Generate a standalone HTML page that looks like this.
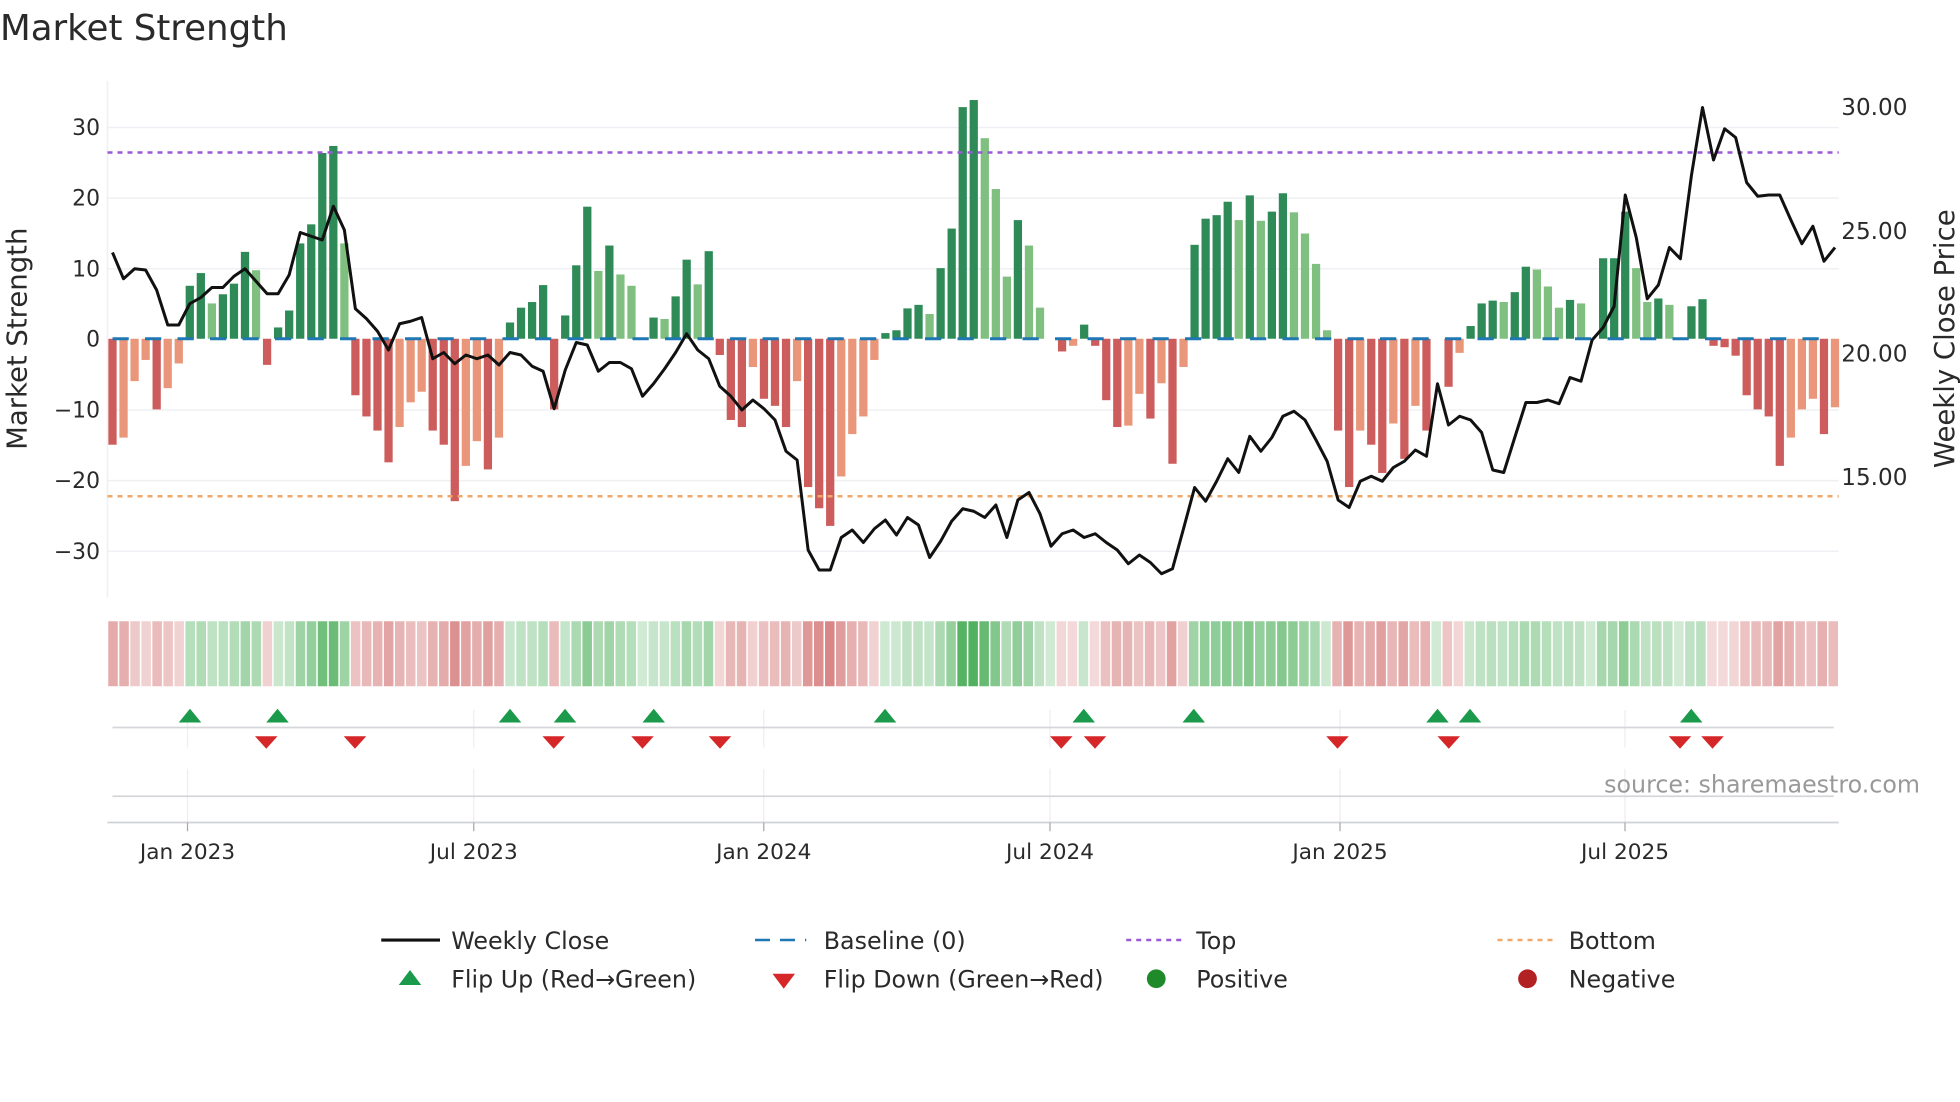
<!DOCTYPE html>
<html><head><meta charset="utf-8"><style>
html,body{margin:0;padding:0;background:#fff;width:1960px;height:1102px;overflow:hidden}
svg{display:block}
text{font-family:"DejaVu Sans","Liberation Sans",sans-serif;fill:#2a2a2a}
</style></head><body>
<svg id="s" width="1960" height="1102" viewBox="0 0 1568 881.6" xmlns="http://www.w3.org/2000/svg">
<text x="0" y="32" font-size="28.5">Market Strength</text>
<g stroke="#eef0f3" stroke-width="1.2">
<line x1="86" x2="1471" y1="102" y2="102"/><line x1="86" x2="1471" y1="158.5" y2="158.5"/><line x1="86" x2="1471" y1="215" y2="215"/>
<line x1="86" x2="1471" y1="328" y2="328"/><line x1="86" x2="1471" y1="384.5" y2="384.5"/><line x1="86" x2="1471" y1="441" y2="441"/>
<line x1="86" x2="86" y1="65" y2="478"/>
</g>
<g font-size="17.5" text-anchor="end">
<text x="80" y="108">30</text><text x="80" y="164.5">20</text><text x="80" y="221">10</text><text x="80" y="277">0</text>
<text x="80" y="334">−10</text><text x="80" y="390.5">−20</text><text x="80" y="447">−30</text>
</g>
<g font-size="18.5"><text x="1473" y="92">30.00</text><text x="1473" y="191">25.00</text><text x="1473" y="289">20.00</text><text x="1473" y="388">15.00</text></g>
<text font-size="22" transform="translate(21,271) rotate(-90)" text-anchor="middle">Market Strength</text>
<text font-size="22" transform="translate(1563,271) rotate(-90)" text-anchor="middle">Weekly Close Price</text>
<g id="bars"></g>
<line x1="86" x2="1471" y1="122" y2="122" stroke="#9b59d6" stroke-width="2" stroke-dasharray="4,4"/>
<line x1="86" x2="1471" y1="397" y2="397" stroke="#f0a868" stroke-width="2" stroke-dasharray="4,4"/>
<polyline id="price" fill="none" stroke="#111" stroke-width="2.4" stroke-linejoin="round"/>
<g id="heat"></g>
<g stroke="#eceef2" stroke-width="1">
<line x1="150" x2="150" y1="568" y2="598"/><line x1="379" x2="379" y1="568" y2="598"/><line x1="611" x2="611" y1="568" y2="598"/><line x1="840" x2="840" y1="568" y2="598"/><line x1="1072" x2="1072" y1="568" y2="598"/><line x1="1300" x2="1300" y1="568" y2="598"/>
<line x1="150" x2="150" y1="615" y2="658"/><line x1="379" x2="379" y1="615" y2="658"/><line x1="611" x2="611" y1="615" y2="658"/><line x1="840" x2="840" y1="615" y2="658"/><line x1="1072" x2="1072" y1="615" y2="658"/><line x1="1300" x2="1300" y1="615" y2="658"/>
</g>
<line x1="90" x2="1467" y1="582" y2="582" stroke="#d4d6da" stroke-width="1.4"/>
<line x1="90" x2="1467" y1="637" y2="637" stroke="#d4d6da" stroke-width="1.4"/>
<line x1="86" x2="1471" y1="658" y2="658" stroke="#cfd1d5" stroke-width="1.4"/>
<g stroke="#aaa" stroke-width="1"><line x1="150" x2="150" y1="658" y2="665"/><line x1="379" x2="379" y1="658" y2="665"/><line x1="611" x2="611" y1="658" y2="665"/><line x1="840" x2="840" y1="658" y2="665"/><line x1="1072" x2="1072" y1="658" y2="665"/><line x1="1300" x2="1300" y1="658" y2="665"/></g>
<g id="mk"></g>
<g font-size="17.3" text-anchor="middle">
<text x="150" y="687">Jan 2023</text><text x="379" y="687">Jul 2023</text><text x="611" y="687">Jan 2024</text><text x="840" y="687">Jul 2024</text><text x="1072" y="687">Jan 2025</text><text x="1300" y="687">Jul 2025</text>
</g>
<text x="1536" y="634" font-size="19" text-anchor="end" style="fill:#999">source: sharemaestro.com</text>
<g font-size="19">
<line x1="305" x2="352" y1="752" y2="752" stroke="#111" stroke-width="2.5"/><text x="361" y="759">Weekly Close</text>
<line x1="604" x2="645" y1="752" y2="752" stroke="#1f77b4" stroke-width="2" stroke-dasharray="12,8"/><text x="659" y="759">Baseline (0)</text>
<line x1="901" x2="945" y1="752" y2="752" stroke="#9b59d6" stroke-width="2" stroke-dasharray="4,4"/><text x="957" y="759">Top</text>
<line x1="1198" x2="1243" y1="752" y2="752" stroke="#f0a868" stroke-width="2" stroke-dasharray="4,4"/><text x="1255" y="759">Bottom</text>
<polygon points="319,788 337,788 328,776" fill="#1a9a4a"/><text x="361" y="790">Flip Up (Red→Green)</text>
<polygon points="618,779 636,779 627,791" fill="#d62728"/><text x="659" y="790">Flip Down (Green→Red)</text>
<circle cx="925" cy="783" r="7.5" fill="#1f8a2a"/><text x="957" y="790">Positive</text>
<circle cx="1222" cy="783" r="7.5" fill="#b22222"/><text x="1255" y="790">Negative</text>
</g>
</svg>
<script>
var V=[-15,-14,-6,-3,-10,-7,-3.5,7.5,9.3,5,6.3,7.8,12.3,9.7,-3.7,1.6,4,13.5,16.2,26.3,27.3,13.5,-8,-11,-13,-17.5,-12.5,-9,-7.5,-13,-15,-23,-18,-14.5,-18.5,-14,2.3,4.4,5.2,7.6,-10,3.3,10.4,18.7,9.6,13.2,9.1,7.5,0,3,2.8,6,11.2,7.7,12.4,-2.3,-11.5,-12.5,-4,-8.5,-9.5,-12.5,-6,-21,-24,-26.5,-19.5,-13.5,-11,-3,0.8,1.2,4.3,4.8,3.5,10,15.6,32.8,33.8,28.4,21.2,8.8,16.8,13.2,4.4,0,-1.8,-1,2,-1,-8.7,-12.5,-12.3,-7.8,-11.3,-6.3,-17.7,-4,13.3,17,17.5,19.4,16.8,20.3,16.7,18,20.6,17.9,14.9,10.6,1.2,-13,-21,-13,-15,-19,-12,-17,-9.5,-13,0,-6.8,-2,1.8,5,5.4,5.2,6.6,10.2,9.8,7.4,4.4,5.5,5,0,11.4,11.4,18,10,5.2,5.7,4.8,0,4.6,5.6,-1,-1.2,-2.4,-8,-10,-11,-18,-14,-10,-8.5,-13.5,-9.7];
var PY=[202,223,215,216,232,260,260,243,238,230,230,221,215,225,235,235,220,186,189,192,165,184,247,255,265,280,259,257,254,287,282,291,284,287,284,292,282,284,293,297,327,296,274,276,297,290,290,295,317,307,295,282,267,280,287,309,317,328,320,327,336,361,368,440,456,456,430,424,434,423,416,428,414,420,446,433,417,407,409,414,404,430,400,394,411,437,427,424,430,427,434,440,451,444,450,459,455,423,390,401,385,367,378,349,361,350,333,329,336,352,369,400,406,385,381,385,374,369,360,365,307,340,333,336,346,376,378,350,322,322,320,323,302,305,272,262,245,156,190,239,228,198,207,140,86,128,103,110,146,157,156,156,176,195,181,209,198];
var N=V.length,x0=90,dx=(1468-90)/(N-1),z=271,k=5.65,b='',h='',p=[];
for(var i=0;i<N;i++){var x=x0+i*dx,v=V[i],pv=i?V[i-1]:0,c;
 if(v>=0)c=(v>=pv)?'#2e8b57':'#7fbf7f';else c=(v<=pv)?'#cd5c5c':'#e9967a';
 if(Math.abs(v)>0.05){var y1=v>0?z-v*k:z,hh=Math.abs(v)*k;b+='<rect x="'+(x-3.3)+'" y="'+y1+'" width="6.6" height="'+hh+'" fill="'+c+'"/>';}
 var hx=86+i*(1385/N),col,a;
 if(v>=0){a=0.22+0.6*Math.min(v/34,1);col='44,160,60';}else{a=0.2+0.5*Math.min(-v/27,1);col='200,80,80';}
 h+='<rect x="'+(hx+0.6)+'" y="497" width="'+(1385/N-1.2)+'" height="52" fill="rgba('+col+','+a.toFixed(2)+')"/>';
 p.push(x.toFixed(1)+','+PY[i]);}
b+='<line x1="90" x2="1468" y1="271" y2="271" stroke="#1f77b4" stroke-width="2.4" stroke-dasharray="13,13"/>';
document.getElementById('bars').innerHTML=b;document.getElementById('heat').innerHTML=h;
document.getElementById('price').setAttribute('points',p.join(' '));
var up=[152,222,408,452,523,708,867,955,1150,1176,1353],dn=[213,284,443,514,576,849,876,1070,1159,1344,1370],m='';
up.forEach(function(x){m+='<polygon points="'+(x-9)+',578 '+(x+9)+',578 '+x+',567" fill="#1a9a4a"/>';});
dn.forEach(function(x){m+='<polygon points="'+(x-9)+',589 '+(x+9)+',589 '+x+',599" fill="#d62728"/>';});
document.getElementById('mk').innerHTML=m;
</script>
</body></html>
